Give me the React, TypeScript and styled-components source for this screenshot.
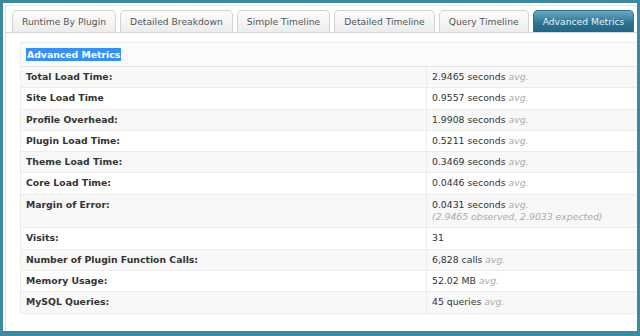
import React from "react";
import styled, { createGlobalStyle } from "styled-components";

const Global = createGlobalStyle`
  html, body { margin: 0; padding: 0; background: #fff; }
  body { font-family: "DejaVu Sans", Verdana, sans-serif; }
`;

const Frame = styled.div`
  width: 640px;
  height: 336px;
  box-sizing: border-box;
  border: 3px solid #3a8ba1;
  border-bottom-width: 5px;
  background: #fff;
  overflow: hidden;
  padding: 2px 0 0 2px;
`;

const Inner = styled.div`
  height: 100%;
  box-sizing: border-box;
  border-top: 1px solid #e4e4e4;
  border-left: 1px solid #e4e4e4;
  display: flex;
  flex-direction: column;
`;

const TabBar = styled.div`
  display: flex;
  gap: 4px;
  padding: 4px 0 0 6px;
  border-bottom: 1px solid #d6d6d6;
  background: #fff;
`;

const Tab = styled.div<{ $active?: boolean }>`
  height: 22px;
  box-sizing: border-box;
  padding: 0 9px;
  display: flex;
  align-items: center;
  font-size: 9.2px;
  white-space: nowrap;
  border: 1px solid ${(p) => (p.$active ? "#2c7590" : "#d3d3d3")};
  border-bottom: none;
  border-radius: 5px 5px 0 0;
  color: ${(p) => (p.$active ? "#e6f1f5" : "#555")};
  background: ${(p) =>
    p.$active
      ? "linear-gradient(#6aaac1, #2d7595 55%, #216687)"
      : "linear-gradient(#fdfdfd, #ececec)"};
`;

const Content = styled.div`
  padding: 9px 0 0 14px;
`;

const Table = styled.div`
  border-left: 1px solid #ececec;
  border-top: 1px solid #ececec;
  border-bottom: 1px solid #ececec;
`;

const Heading = styled.div`
  height: 23px;
  display: flex;
  align-items: center;
  padding-left: 5px;
  background: #fbfbfb;
  border-bottom: 1px solid #e6e6e6;
  font-size: 9.3px;
  font-weight: bold;
`;

const Selected = styled.span`
  background: #3390ff;
  color: #fff;
  padding: 1px 1px;
`;

const Row = styled.div<{ $odd: boolean }>`
  display: grid;
  grid-template-columns: 405px 1fr;
  background: ${(p) => (p.$odd ? "#f8f8f8" : "#fff")};
  border-bottom: 1px solid #ececec;
  font-size: 9.3px;
  color: #333;
  &:last-child { border-bottom: none; }
`;

const Label = styled.div`
  font-weight: bold;
  padding: 4px 5px;
  line-height: 12.3px;
`;

const Value = styled.div`
  padding: 4px 5px;
  line-height: 12.3px;
  border-left: 1px solid #ececec;
`;

const Avg = styled.span`
  color: #aaa;
  font-style: italic;
`;

const Note = styled.div`
  color: #aaa;
  font-style: italic;
`;

type Metric = { label: string; value: string; avg?: boolean; note?: string };

const metrics: Metric[] = [
  { label: "Total Load Time:", value: "2.9465 seconds", avg: true },
  { label: "Site Load Time", value: "0.9557 seconds", avg: true },
  { label: "Profile Overhead:", value: "1.9908 seconds", avg: true },
  { label: "Plugin Load Time:", value: "0.5211 seconds", avg: true },
  { label: "Theme Load Time:", value: "0.3469 seconds", avg: true },
  { label: "Core Load Time:", value: "0.0446 seconds", avg: true },
  {
    label: "Margin of Error:",
    value: "0.0431 seconds",
    avg: true,
    note: "(2.9465 observed, 2.9033 expected)",
  },
  { label: "Visits:", value: "31" },
  { label: "Number of Plugin Function Calls:", value: "6,828 calls", avg: true },
  { label: "Memory Usage:", value: "52.02 MB", avg: true },
  { label: "MySQL Queries:", value: "45 queries", avg: true },
];

const tabs = [
  "Runtime By Plugin",
  "Detailed Breakdown",
  "Simple Timeline",
  "Detailed Timeline",
  "Query Timeline",
  "Advanced Metrics",
];

export default function App() {
  return (
    <>
      <Global />
      <Frame>
        <Inner>
          <TabBar>
            {tabs.map((t) => (
              <Tab key={t} $active={t === "Advanced Metrics"}>
                {t}
              </Tab>
            ))}
          </TabBar>
          <Content>
            <Table>
              <Heading>
                <Selected>Advanced Metrics</Selected>
              </Heading>
              {metrics.map((m, i) => (
                <Row key={m.label} $odd={i % 2 === 0}>
                  <Label>{m.label}</Label>
                  <Value>
                    {m.value}
                    {m.avg && <Avg> avg.</Avg>}
                    {m.note && <Note>{m.note}</Note>}
                  </Value>
                </Row>
              ))}
            </Table>
          </Content>
        </Inner>
      </Frame>
    </>
  );
}
